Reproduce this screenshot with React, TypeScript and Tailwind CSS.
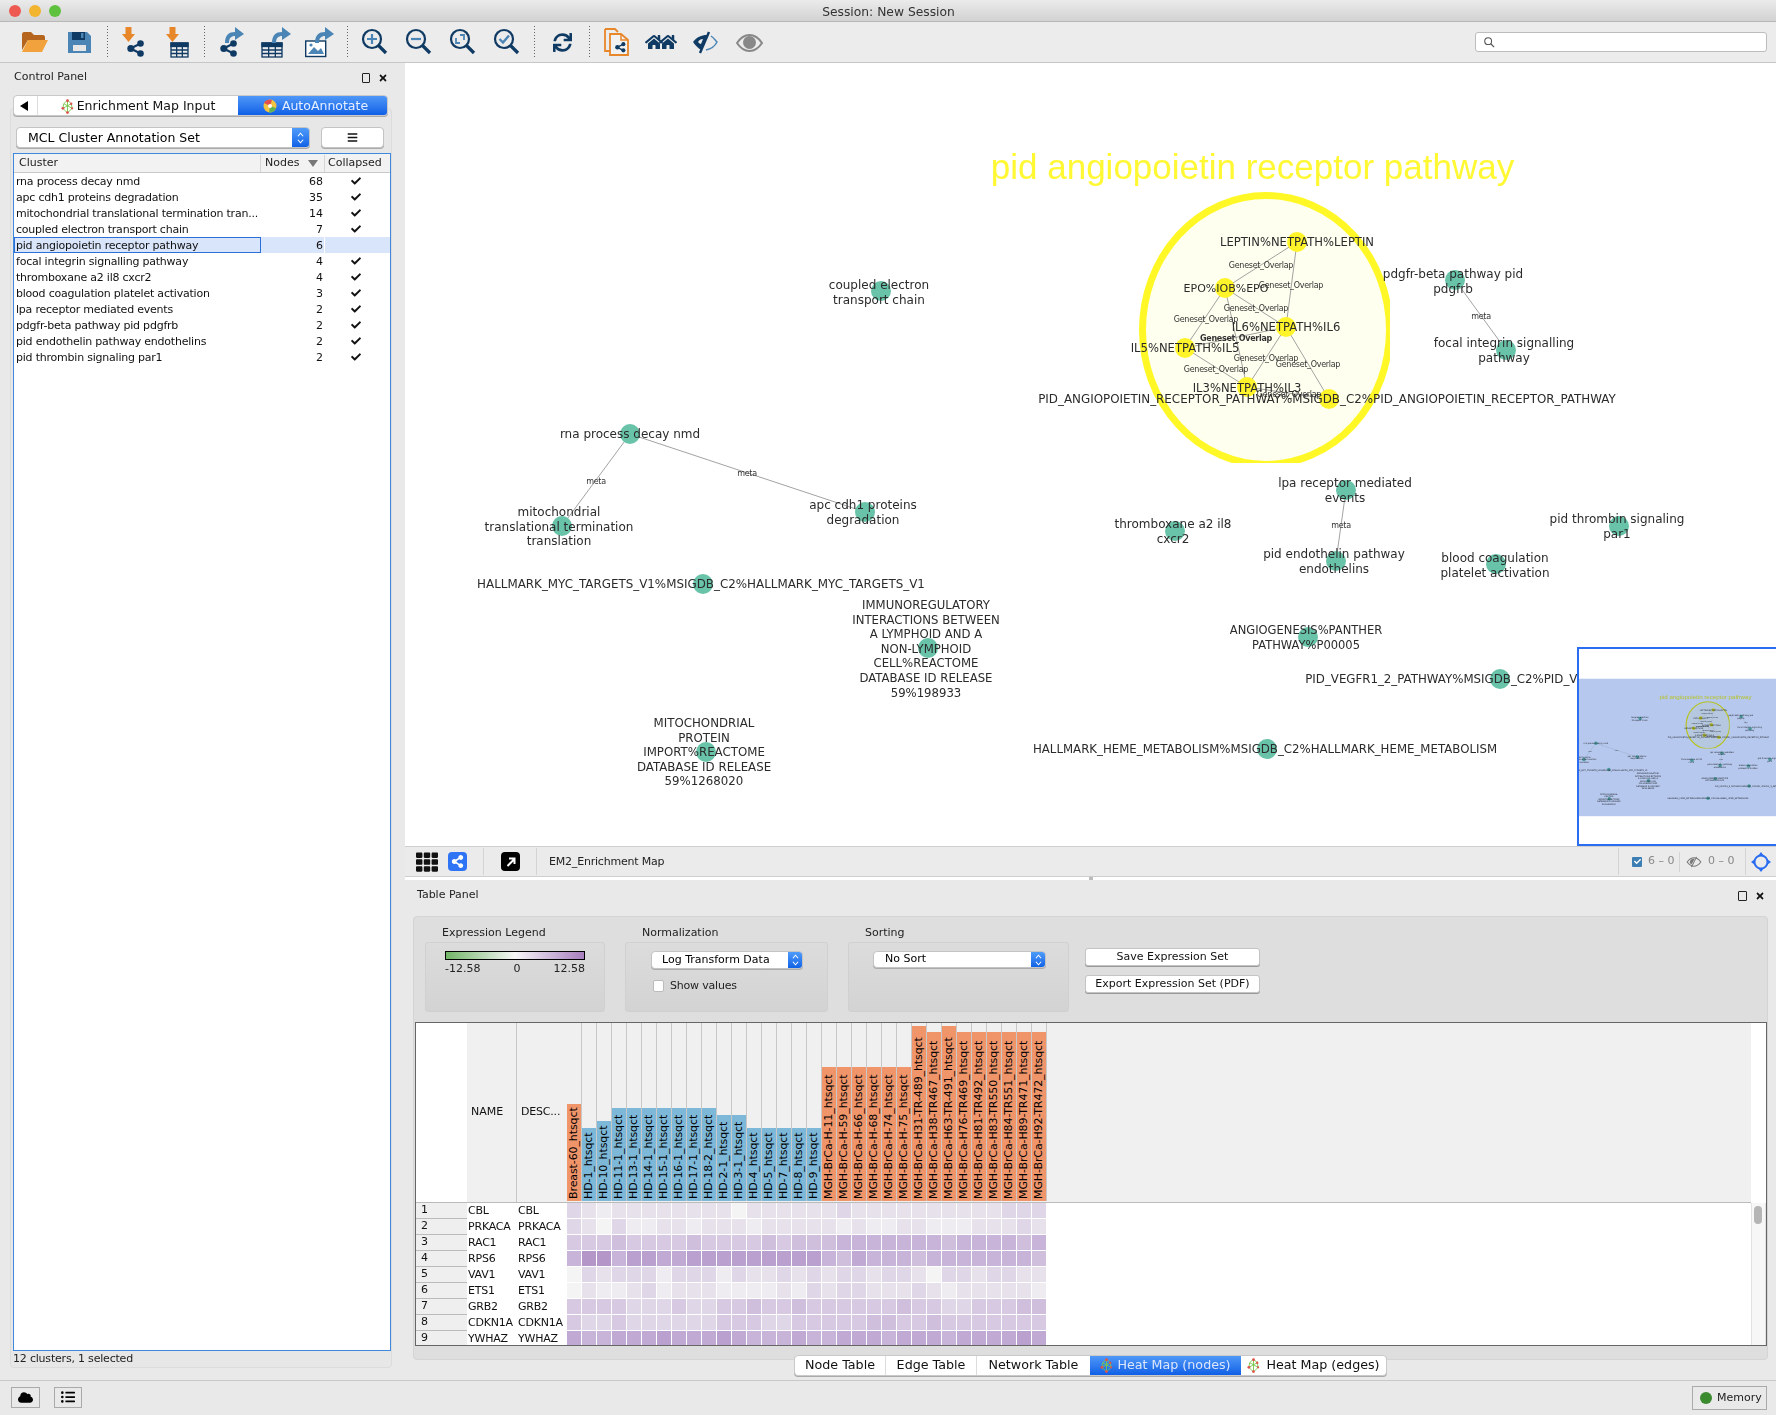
import { FaBars, FaCheck, FaCloud, FaHome, FaListUl, FaShareAlt, FaSync, FaTh, FaTimes } from "react-icons/fa";

const NAVY = "#0f3a63";
const STEEL = "#4a85b5";
const ORANGE = "#e8862a";

type GraphNode = { x: number; y: number; lx: number; ly: number; lines: string[]; hot?: boolean; fs?: number };

const NODES: Record<string, GraphNode> = {
  leptin: { x: 1297, y: 242, lx: 1297, ly: 242, lines: ["LEPTIN%NETPATH%LEPTIN"], hot: true, fs: 11.6 },
  epo: { x: 1225, y: 288, lx: 1226, ly: 288, lines: ["EPO%IOB%EPO"], hot: true, fs: 11 },
  il6: { x: 1286, y: 327, lx: 1286, ly: 327, lines: ["IL6%NETPATH%IL6"], hot: true, fs: 11.6 },
  il5: { x: 1185, y: 348, lx: 1185, ly: 348, lines: ["IL5%NETPATH%IL5"], hot: true, fs: 11.6 },
  il3: { x: 1247, y: 387, lx: 1247, ly: 388, lines: ["IL3%NETPATH%IL3"], hot: true, fs: 11.6 },
  ang: { x: 1329, y: 399, lx: 1327, ly: 399, lines: ["PID_ANGIOPOIETIN_RECEPTOR_PATHWAY%MSIGDB_C2%PID_ANGIOPOIETIN_RECEPTOR_PATHWAY"], hot: true, fs: 11.88 },
  pdgfr: { x: 1455, y: 280, lx: 1453, ly: 274, lines: ["pdgfr-beta pathway pid", "pdgfrb"] },
  focal: { x: 1506, y: 350, lx: 1504, ly: 343, lines: ["focal integrin signalling", "pathway"] },
  coupled: { x: 881, y: 291, lx: 879, ly: 285, lines: ["coupled electron", "transport chain"] },
  rna: { x: 630, y: 434, lx: 630, ly: 434, lines: ["rna process decay nmd"] },
  mito: { x: 562, y: 526, lx: 559, ly: 512, lines: ["mitochondrial", "translational termination", "translation"] },
  apc: { x: 865, y: 512, lx: 863, ly: 505, lines: ["apc cdh1 proteins", "degradation"] },
  myc: { x: 703, y: 584, lx: 701, ly: 584, lines: ["HALLMARK_MYC_TARGETS_V1%MSIGDB_C2%HALLMARK_MYC_TARGETS_V1"], fs: 11.9 },
  immuno: {
    x: 928,
    y: 648,
    lx: 926,
    ly: 605,
    lines: ["IMMUNOREGULATORY", "INTERACTIONS BETWEEN", "A LYMPHOID AND A", "NON-LYMPHOID", "CELL%REACTOME", "DATABASE ID RELEASE", "59%198933"],
    fs: 11.7,
  },
  import: { x: 706, y: 752, lx: 704, ly: 723, lines: ["MITOCHONDRIAL", "PROTEIN", "IMPORT%REACTOME", "DATABASE ID RELEASE", "59%1268020"], fs: 11.8 },
  lpa: { x: 1346, y: 490, lx: 1345, ly: 483, lines: ["lpa receptor mediated", "events"] },
  thromboxane: { x: 1175, y: 531, lx: 1173, ly: 524, lines: ["thromboxane a2 il8", "cxcr2"] },
  endo: { x: 1336, y: 561, lx: 1334, ly: 554, lines: ["pid endothelin pathway", "endothelins"] },
  blood: { x: 1496, y: 564, lx: 1495, ly: 558, lines: ["blood coagulation", "platelet activation"] },
  thrombin: { x: 1619, y: 526, lx: 1617, ly: 519, lines: ["pid thrombin signaling", "par1"] },
  angio: { x: 1308, y: 637, lx: 1306, ly: 630, lines: ["ANGIOGENESIS%PANTHER", "PATHWAY%P00005"], fs: 11.5 },
  vegfr: { x: 1500, y: 679, lx: 1498, ly: 679, lines: ["PID_VEGFR1_2_PATHWAY%MSIGDB_C2%PID_VEGFR1_2_PATHWAY"], fs: 11.8 },
  heme: { x: 1267, y: 749, lx: 1265, ly: 749, lines: ["HALLMARK_HEME_METABOLISM%MSIGDB_C2%HALLMARK_HEME_METABOLISM"], fs: 11.77 },
};

const EDGES = [
  ["leptin", "epo"],
  ["leptin", "il6"],
  ["epo", "il6"],
  ["epo", "il5"],
  ["epo", "il3"],
  ["il6", "il5"],
  ["il6", "il3"],
  ["il6", "ang"],
  ["il5", "il3"],
  ["il3", "ang"],
  ["pdgfr", "focal"],
  ["rna", "mito"],
  ["rna", "apc"],
  ["lpa", "endo"],
];

const EDGE_LABELS = [
  { x: 1261, y: 265, t: "Geneset_Overlap" },
  { x: 1291, y: 285, t: "Geneset_Overlap" },
  { x: 1256, y: 308, t: "Geneset_Overlap" },
  { x: 1206, y: 319, t: "Geneset_Overlap" },
  { x: 1236, y: 338, t: "Geneset_Overlap", bold: true },
  { x: 1266, y: 358, t: "Geneset_Overlap" },
  { x: 1308, y: 364, t: "Geneset_Overlap" },
  { x: 1216, y: 369, t: "Geneset_Overlap" },
  { x: 1289, y: 394, t: "Geneset_Overlap" },
  { x: 1481, y: 316, t: "meta" },
  { x: 596, y: 481, t: "meta" },
  { x: 747, y: 473, t: "meta" },
  { x: 1341, y: 525, t: "meta" },
];

function NetworkGraph({ id }: { id: string }) {
  return (
    <g>
      <clipPath id={id}>
        <rect x="400" y="60" width="990" height="403" />
      </clipPath>
      <text x="1252.5" y="179" fontSize="35" fill="#fff833" textAnchor="middle" className="font-['Liberation_Sans',sans-serif]">
        pid angiopoietin receptor pathway
      </text>
      <ellipse cx="1266" cy="330" rx="123.5" ry="134.5" fill="#fffff0" stroke="#fff826" strokeWidth="7" clipPath={`url(#${id})`} />
      {EDGES.map(([a, b]) => (
        <line key={a + b} x1={NODES[a].x} y1={NODES[a].y} x2={NODES[b].x} y2={NODES[b].y} stroke="#8a8a8a" strokeWidth="0.8" />
      ))}
      {Object.entries(NODES).map(([key, n]) => (
        <circle key={key} cx={n.x} cy={n.y} r="10" fill={n.hot ? "#fff42a" : "#68c3a8"} />
      ))}
      {EDGE_LABELS.map((l) => (
        <text
          key={`${l.x}-${l.y}`}
          x={l.x}
          y={l.y}
          fontSize="8"
          fill="#333"
          fontWeight={l.bold ? 700 : 400}
          textAnchor="middle"
          dominantBaseline="central"
          letterSpacing="-0.3"
        >
          {l.t}
        </text>
      ))}
      {Object.entries(NODES).map(([key, n]) =>
        n.lines.map((line, i) => (
          <text key={key + i} x={n.lx} y={n.ly + i * 14.6} fontSize={n.fs ?? 12} fill="#2b2b2b" textAnchor="middle" dominantBaseline="central">
            {line}
          </text>
        )),
      )}
    </g>
  );
}

function ShareGlyph({ x, y, s = 1, c = NAVY }: { x: number; y: number; s?: number; c?: string }) {
  return (
    <g transform={`translate(${x} ${y}) scale(${s})`} fill={c} stroke={c}>
      <path d="M3.5 8.5 L13.5 3.5 M3.5 8.5 L13.5 13.5" strokeWidth="2.2" fill="none" />
      <circle cx="3.8" cy="8.5" r="3.5" stroke="none" />
      <circle cx="13.5" cy="3.5" r="3.3" stroke="none" />
      <circle cx="13.5" cy="13.5" r="3.3" stroke="none" />
    </g>
  );
}

function TableGlyph({ x, y, w = 17, h = 14 }: { x: number; y: number; w?: number; h?: number }) {
  return (
    <g fill="none" stroke={NAVY} strokeWidth="1.3">
      <rect x={x} y={y} width={w} height={h} />
      <rect x={x} y={y} width={w} height={h / 4} fill={NAVY} />
      <path d={`M${x + w / 3} ${y}V${y + h}M${x + (2 * w) / 3} ${y}V${y + h}M${x} ${y + h * 0.5}H${x + w}M${x} ${y + h * 0.75}H${x + w}`} />
    </g>
  );
}

function DownArrow({ x }: { x: number }) {
  return <path transform={`translate(${x} 0)`} d="M3.5 1H9.5V8H13L6.5 16L0 8H3.5Z" fill={ORANGE} />;
}

function CurvedArrow({ x }: { x: number }) {
  return <path transform={`translate(${x} 1)`} d="M0 16C0 8 4 5 10 5V0L19 7L10 13V9C6 9 4 11 4 16Z" fill={STEEL} />;
}

function Icon32({ className, children }: { className: string; children: React.ReactNode }) {
  return (
    <svg viewBox="0 0 32 32" className={`h-8 w-8 shrink-0 ${className}`}>
      {children}
    </svg>
  );
}

function Magnifier({ children }: { children?: React.ReactNode }) {
  return (
    <>
      <circle cx="13" cy="13" r="9" fill="none" stroke={NAVY} strokeWidth="2.2" />
      <path d="M19.5 19.5L27 27" stroke={NAVY} strokeWidth="3.2" />
      {children}
    </>
  );
}

function Sep({ className }: { className: string }) {
  return <div className={`h-[33px] w-px shrink-0 bg-[repeating-linear-gradient(#666_0_1px,transparent_1px_3px)] ${className}`} />;
}

function MainToolbar() {
  return (
    <div className="flex h-[41px] shrink-0 items-center border-b border-[#c6c6c6] bg-[#ececec]">
      <Icon32 className="ml-[19px]">
        <path d="M3 24V8C3 7 4 6 5 6H12L15 9H24C25 9 26 10 26 11V14H9L3 24Z" fill="#b5651d" />
        <path d="M9 14H29L23 26H3Z" fill="#f2a23c" />
      </Icon32>
      <Icon32 className="ml-[12px]">
        <path d="M5 6H24L28 10V27H5Z" fill={STEEL} />
        <path d="M9 6H22V14H9Z" fill={NAVY} />
        <rect x="18" y="7" width="2.5" height="5" fill={STEEL} />
        <rect x="10" y="19" width="13" height="6" fill="#e6e6e6" />
      </Icon32>
      <Sep className="ml-[12px]" />
      <Icon32 className="ml-[9px]">
        <DownArrow x={5} />
        <ShareGlyph x={10} y={14} />
      </Icon32>
      <Icon32 className="ml-[11px]">
        <DownArrow x={6} />
        <TableGlyph x={11} y={17} />
      </Icon32>
      <Sep className="ml-[12px]" />
      <Icon32 className="ml-[8px]">
        <ShareGlyph x={7} y={14} />
        <CurvedArrow x={12} />
      </Icon32>
      <Icon32 className="ml-[15px]">
        <TableGlyph x={2} y={17} w={20} />
        <CurvedArrow x={12} />
      </Icon32>
      <Icon32 className="ml-[12px]">
        <rect x="1.7" y="15" width="20" height="15.5" fill="#fff" stroke={NAVY} strokeWidth="1.4" />
        <path d="M4 28L10 21L14 25L17 22L20 28Z" fill={STEEL} />
        <circle cx="7" cy="19" r="1.6" fill={STEEL} />
        <CurvedArrow x={11} />
      </Icon32>
      <Sep className="ml-[11px]" />
      <Icon32 className="ml-[11px]">
        <Magnifier>
          <path d="M8 13H18M13 8V18" stroke={STEEL} strokeWidth="2.2" />
        </Magnifier>
      </Icon32>
      <Icon32 className="ml-[12px]">
        <Magnifier>
          <path d="M8 13H18" stroke={STEEL} strokeWidth="2.2" />
        </Magnifier>
      </Icon32>
      <Icon32 className="ml-[12px]">
        <Magnifier>
          <path d="M9 12V17H13M17 14V9H13" stroke={STEEL} strokeWidth="1.8" fill="none" />
        </Magnifier>
      </Icon32>
      <Icon32 className="ml-[12px]">
        <Magnifier>
          <path d="M8.5 13L12 16.5L18 9.5" stroke={STEEL} strokeWidth="2.4" fill="none" />
        </Magnifier>
      </Icon32>
      <Sep className="ml-[11px]" />
      <div className="ml-[11px] flex h-8 w-8 shrink-0 items-center justify-center">
        <FaSync size={19} color={NAVY} />
      </div>
      <Sep className="ml-[11px]" />
      <Icon32 className="ml-[11px]">
        <path d="M4 3H14L17 6M4 3V25H9" fill="none" stroke={ORANGE} strokeWidth="1.8" />
        <path d="M9 8H20L27 14V29H9Z" fill="#f1f1f1" stroke={ORANGE} strokeWidth="1.8" />
        <path d="M20 8V14H27" fill="none" stroke={ORANGE} strokeWidth="1.5" />
        <ShareGlyph x={14} y={16} s={0.62} />
      </Icon32>
      <div className="ml-[12px] flex h-8 w-8 shrink-0 items-center justify-center">
        <FaHome size={18} color={NAVY} className="-mr-[2px]" />
        <FaHome size={18} color={NAVY} className="-ml-[2px]" />
      </div>
      <Icon32 className="ml-[12px]">
        <path d="M4 16C8 11 12 9 18 9L12 24C9 22 7 20 4 16Z" fill={NAVY} />
        <path d="M9 16C10 14 12 13 14 13L12 18C11 18 10 17 9 16Z" fill="#ececec" />
        <path d="M20 6L11 27" stroke={NAVY} strokeWidth="2.4" />
        <path d="M22 10C25 12 26 14 28 16C26 20 22 23 17 24" fill="none" stroke={STEEL} strokeWidth="1.5" />
      </Icon32>
      <Icon32 className="ml-[12px]">
        <path d="M4 17C8 11 12 9 16.500 9C21 9 25 11 29 17C25 23 21 25 16.500 25C12 25 8 23 4 17Z" fill="none" stroke="#888" strokeWidth="2" />
        <circle cx="16.500" cy="16.500" r="6.500" fill="#888" />
      </Icon32>
      <div className="ml-auto mr-[9px] flex h-[20px] w-[292px] items-center rounded-[3px] border border-[#bdbdbd] bg-white pl-[7px]">
        <svg viewBox="0 0 14 14" className="h-[12px] w-[12px]">
          <circle cx="6" cy="6" r="4" fill="none" stroke="#555" strokeWidth="1.2" />
          <path d="M9 9L13 13" stroke="#555" strokeWidth="1.4" />
        </svg>
      </div>
    </div>
  );
}

function Select({ label, className, textClass, stepClass }: { label: string; className: string; textClass: string; stepClass: string }) {
  return (
    <div className={`flex items-center overflow-hidden rounded-[4px] border border-[#c4c4c4] bg-white shadow-[0_1px_0_#aaa] ${className}`}>
      <span className={`flex-1 truncate text-black ${textClass}`}>{label}</span>
      <div className={`flex h-full shrink-0 items-center justify-center bg-gradient-to-b from-[#4f9bfb] to-[#0f62e6] ${stepClass}`}>
        <svg viewBox="0 0 10 16" className="h-[14px] w-[9px]">
          <path d="M2 6L5 2.500L8 6M2 10L5 13.500L8 10" fill="none" stroke="#fff" strokeWidth="1.2" />
        </svg>
      </div>
    </div>
  );
}

function EmIcon({ className = "" }: { className?: string }) {
  return (
    <svg viewBox="0 0 14 16" className={`h-[15px] w-[13px] shrink-0 ${className}`}>
      <path d="M7 1L11 5L12 10L7 15L2 10L3 5ZM7 1V15M3 5L12 10M11 5L2 10" fill="none" stroke="#7ac74f" strokeWidth="1" />
      <g fill="#e2504c">
        <circle cx="7" cy="1.800" r="1.500" />
        <circle cx="11" cy="5" r="1.300" />
        <circle cx="2" cy="10" r="1.500" />
        <circle cx="7" cy="14.500" r="1.500" />
        <circle cx="12" cy="10" r="1.200" />
      </g>
    </svg>
  );
}

const CLUSTERS: [string, number, boolean][] = [
  ["rna process decay nmd", 68, true],
  ["apc cdh1 proteins degradation", 35, true],
  ["mitochondrial translational termination tran...", 14, true],
  ["coupled electron transport chain", 7, true],
  ["pid angiopoietin receptor pathway", 6, false],
  ["focal integrin signalling pathway", 4, true],
  ["thromboxane a2 il8 cxcr2", 4, true],
  ["blood coagulation platelet activation", 3, true],
  ["lpa receptor mediated events", 2, true],
  ["pdgfr-beta pathway pid pdgfrb", 2, true],
  ["pid endothelin pathway endothelins", 2, true],
  ["pid thrombin signaling par1", 2, true],
];

function ClusterTable() {
  return (
    <div className="ml-[1px] mt-[5px] flex w-[378px] flex-1 flex-col border border-[#3f88dc] bg-white text-[11px] text-[#111]">
      <div className="flex h-[19px] shrink-0 items-center border-b border-[#c9c9c9] bg-[#f2f2f2] pt-[1px] text-[#222]">
        <div className="w-[247px] border-r border-[#d5d5d5] pl-[5px]">Cluster</div>
        <div className="flex w-[64px] items-center border-r border-[#d5d5d5] pl-[4px]">
          Nodes
          <span className="ml-[9px] h-0 w-0 border-x-[5px] border-t-[7px] border-x-transparent border-t-[#777]" />
        </div>
        <div className="flex-1 pl-[3px]">Collapsed</div>
      </div>
      {CLUSTERS.map(([name, n, collapsed]) => {
        const selected = !collapsed;
        return (
          <div key={name} className="flex h-4 shrink-0 items-center">
            <div className={`flex h-full w-[247px] items-center ${selected ? "border border-[#2c6fd6] bg-[#d9e5fb] pl-[1px]" : "pl-[2px]"}`}>
              <span className="whitespace-nowrap pt-[2px] tracking-[-0.22px]">{name}</span>
            </div>
            <div className={`flex h-full w-[64px] items-center justify-end border-r border-white pr-[1px] pt-[2px] ${selected ? "bg-[#d9e5fb]" : ""}`}>{n}</div>
            <div className={`flex h-full flex-1 items-center pl-[26px] ${selected ? "bg-[#d9e5fb]" : ""}`}>
              {collapsed && <FaCheck size={10} color="#111" />}
            </div>
          </div>
        );
      })}
    </div>
  );
}

function ControlPanel() {
  return (
    <aside className="flex w-[405px] shrink-0 flex-col pb-[12px]">
      <div className="flex h-[32px] shrink-0 items-center pb-[3px] pl-[14px] pr-[17px] text-[11px] text-[#222]">
        <span className="flex-1">Control Panel</span>
        <span className="mr-[8px] h-[10px] w-[8px] rounded-[1px] border border-[#222]" />
        <FaTimes size={10} color="#111" />
      </div>
      <div className="relative z-10 ml-[13px] flex h-[21px] w-[375px] shrink-0 overflow-hidden rounded-[4px] border border-[#c9c9c9] bg-white text-[12.5px] shadow-[0_1px_0_#aaa]">
        <div className="flex w-[24px] items-center justify-center border-r border-[#ddd] pr-[3px]">
          <span className="h-0 w-0 border-y-[5px] border-r-[8px] border-y-transparent border-r-black" />
        </div>
        <div className="flex w-[200px] items-center justify-center gap-[3px] pt-[1px] text-[#111]">
          <EmIcon />
          Enrichment Map Input
        </div>
        <div className="flex flex-1 items-center justify-center gap-[5px] bg-gradient-to-b from-[#4f97f8] to-[#0d5fe6] pl-[6px] pt-[1px] text-[#e6efff]">
          <svg viewBox="0 0 14 14" className="h-[14px] w-[14px]">
            <circle cx="7" cy="7" r="6.500" fill="#f5c342" />
            <path d="M7 7L1 4A6.500 6.500 0 0 1 9 1Z" fill="#e2504c" />
            <path d="M7 7L13 9A6.500 6.500 0 0 1 6 13.400Z" fill="#62b356" />
            <circle cx="7" cy="7" r="2" fill="#fff" />
          </svg>
          AutoAnnotate
        </div>
      </div>
      <div className="-mt-[8px] ml-[10px] flex w-[382px] flex-1 flex-col rounded-[4px] border border-[#dcdcdc] bg-[#e7e7e7] pl-[1px] pt-[18px]">
        <div className="flex shrink-0 items-center pl-[4px]">
          <Select label="MCL Cluster Annotation Set" className="h-[21px] w-[294px]" textClass="pl-[11px] pt-[1px] text-[12.5px]" stepClass="w-[17px]" />
          <div className="ml-[11px] flex h-[21px] w-[63px] items-center justify-center rounded-[4px] border border-[#c4c4c4] bg-white shadow-[0_1px_0_#aaa]">
            <FaBars size={11} color="#111" />
          </div>
        </div>
        <ClusterTable />
        <div className="h-[16px] shrink-0 pl-[1px] text-[11px] leading-[15px] tracking-[-0.2px] text-[#222]">12 clusters, 1 selected</div>
      </div>
    </aside>
  );
}

function NetworkCanvas() {
  return (
    <div className="relative h-[783px] shrink-0 overflow-hidden bg-white">
      <svg viewBox="405 63 1371 783" className="absolute inset-0 h-[783px] w-[1371px]">
        <NetworkGraph id="main-clip" />
      </svg>
      <div className="absolute bottom-0 right-0 h-[199px] w-[199px] border-2 border-r-0 border-[#2a6df0] bg-white">
        <svg viewBox="534 -107 1119 1118" className="h-[195px] w-[197px]" preserveAspectRatio="none">
          <NetworkGraph id="thumb-clip" />
          <rect x="534" y="62" width="1119" height="791" fill="#b6c8ee" className="mix-blend-multiply" />
          <rect x="534" y="-107" width="1119" height="169" fill="#fff" />
          <rect x="534" y="853" width="1119" height="170" fill="#fff" />
        </svg>
      </div>
    </div>
  );
}

function NetworkBar() {
  return (
    <div className="flex h-[31px] shrink-0 items-center border-y border-[#cecece] bg-[#ebebeb] text-[11px] text-[#222]">
      <FaTh size={22} color="#111" className="ml-[11px]" />
      <div className="ml-[10px] flex h-[19px] w-[19px] items-center justify-center rounded-[4px] bg-[#2f74f5]">
        <FaShareAlt size={13} color="#fff" />
      </div>
      <div className="ml-[16px] h-[27px] w-px bg-[#d4d4d4]" />
      <div className="ml-[17px] flex h-[19px] w-[19px] items-center justify-center rounded-[4px] bg-black">
        <svg viewBox="0 0 12 12" className="h-[12px] w-[12px]">
          <path d="M2.500 10L9 3.500M4 2.500H9.500V8" fill="none" stroke="#fff" strokeWidth="2" />
        </svg>
      </div>
      <div className="ml-[16px] h-[27px] w-px bg-[#d4d4d4]" />
      <span className="ml-[12px] pt-[2px] tracking-[-0.2px]">EM2_Enrichment Map</span>
      <div className="ml-auto h-[27px] w-px bg-[#d4d4d4]" />
      <span className="ml-[13px] flex h-[10px] w-[10px] items-center justify-center rounded-[1px] bg-[#3d7fb5]">
        <FaCheck size={7} color="#fff" />
      </span>
      <span className="ml-[6px] w-[29px] text-[#888]">6 – 0</span>
      <div className="ml-[2px] h-[20px] w-px bg-[#d4d4d4]" />
      <svg viewBox="0 0 18 14" className="ml-[6px] h-[12px] w-[16px]">
        <path d="M1 7C4 3 6.500 2 9 2C12 2 14 3 17 7C14 11 12 12 9 12C6.500 12 4 11 1 7Z" fill="none" stroke="#777" strokeWidth="1.200" />
        <path d="M4 7C5 4 7 3 10 3L6 10C5 9 4 8 4 7Z" fill="#777" />
        <path d="M12 1L6 13" stroke="#777" strokeWidth="1.200" />
      </svg>
      <span className="ml-[6px] w-[29px] text-[#888]">0 – 0</span>
      <div className="ml-[8px] h-[27px] w-px bg-[#d4d4d4]" />
      <svg viewBox="0 0 20 20" className="mx-[5px] h-[20px] w-[20px]">
        <circle cx="10" cy="10" r="6.500" fill="none" stroke="#2a6df0" strokeWidth="2" />
        <path d="M10 0L13 4H7ZM10 20L13 16H7ZM0 10L4 7V13ZM20 10L16 7V13Z" fill="#2a6df0" />
      </svg>
    </div>
  );
}

function Group({ title, titleClass, className, children }: { title: string; titleClass: string; className: string; children: React.ReactNode }) {
  return (
    <div className={`flex shrink-0 flex-col ${className}`}>
      <div className={`h-[17px] text-[11px] leading-[15px] text-[#222] ${titleClass}`}>{title}</div>
      <div className="relative h-[70px] rounded-[3px] border border-[#d0d0d0] bg-gradient-to-b from-[#dcdcdc] to-[#d3d3d3]">{children}</div>
    </div>
  );
}

type Col = { name: string; bar: string; height: string };

const blue = "bg-[#7db8d8]";
const orange = "bg-[#f0956a]";

const COLUMNS: Col[] = [
  { name: "Breast-60_htsqct", bar: orange, height: "h-[97px]" },
  { name: "HD-1_htsqct", bar: blue, height: "h-[73px]" },
  { name: "HD-10_htsqct", bar: blue, height: "h-[80px]" },
  { name: "HD-11-1_htsqct", bar: blue, height: "h-[93px]" },
  { name: "HD-13-1_htsqct", bar: blue, height: "h-[93px]" },
  { name: "HD-14-1_htsqct", bar: blue, height: "h-[93px]" },
  { name: "HD-15-1_htsqct", bar: blue, height: "h-[93px]" },
  { name: "HD-16-1_htsqct", bar: blue, height: "h-[93px]" },
  { name: "HD-17-1_htsqct", bar: blue, height: "h-[93px]" },
  { name: "HD-18-2_htsqct", bar: blue, height: "h-[93px]" },
  { name: "HD-2-1_htsqct", bar: blue, height: "h-[86px]" },
  { name: "HD-3-1_htsqct", bar: blue, height: "h-[86px]" },
  { name: "HD-4_htsqct", bar: blue, height: "h-[73px]" },
  { name: "HD-5_htsqct", bar: blue, height: "h-[73px]" },
  { name: "HD-7_htsqct", bar: blue, height: "h-[73px]" },
  { name: "HD-8_htsqct", bar: blue, height: "h-[73px]" },
  { name: "HD-9_htsqct", bar: blue, height: "h-[73px]" },
  { name: "MGH-BrCa-H-11_htsqct", bar: orange, height: "h-[134px]" },
  { name: "MGH-BrCa-H-59_htsqct", bar: orange, height: "h-[134px]" },
  { name: "MGH-BrCa-H-66_htsqct", bar: orange, height: "h-[134px]" },
  { name: "MGH-BrCa-H-68_htsqct", bar: orange, height: "h-[134px]" },
  { name: "MGH-BrCa-H-74_htsqct", bar: orange, height: "h-[134px]" },
  { name: "MGH-BrCa-H-75_htsqct", bar: orange, height: "h-[134px]" },
  { name: "MGH-BrCa-H31-TR-489_htsqct", bar: orange, height: "h-[175px]" },
  { name: "MGH-BrCa-H38-TR467_htsqct", bar: orange, height: "h-[169px]" },
  { name: "MGH-BrCa-H63-TR-491_htsqct", bar: orange, height: "h-[175px]" },
  { name: "MGH-BrCa-H76-TR469_htsqct", bar: orange, height: "h-[169px]" },
  { name: "MGH-BrCa-H81-TR492_htsqct", bar: orange, height: "h-[169px]" },
  { name: "MGH-BrCa-H83-TR550_htsqct", bar: orange, height: "h-[169px]" },
  { name: "MGH-BrCa-H84-TR551_htsqct", bar: orange, height: "h-[169px]" },
  { name: "MGH-BrCa-H89-TR471_htsqct", bar: orange, height: "h-[169px]" },
  { name: "MGH-BrCa-H92-TR472_htsqct", bar: orange, height: "h-[169px]" },
];

const SHADES = [
  "bg-[#f4f4f4]",
  "bg-[#eeebf1]",
  "bg-[#e7e1ec]",
  "bg-[#dfd6e7]",
  "bg-[#d6c9e1]",
  "bg-[#cfbfdc]",
  "bg-[#c8b4d8]",
  "bg-[#c0a9d3]",
  "bg-[#b9a0ce]",
  "bg-[#b496c9]",
];

const ROWS: [string, string][] = [
  ["CBL", "32122222222022222232222222222333"],
  ["PRKACA", "32031122122212222212112211122232"],
  ["RAC1", "44454444544445455566666665666656"],
  ["RPS6", "69968877888888888657666566666665"],
  ["VAV1", "03233313331322323233233203323322"],
  ["ETS1", "02112312221111213233222321222221"],
  ["GRB2", "44443334334454454444445443344455"],
  ["CDKN1A", "43343333334443344444554454444444"],
  ["YWHAZ", "76677787778766676677767776777787"],
];

function HeatMap() {
  return (
    <div className="ml-[1px] flex h-[324px] w-[1352px] shrink-0 overflow-hidden border border-[#666] bg-white">
      <div className="w-[1335px] shrink-0">
        <div className="flex h-[180px] border-b border-[#bbb]">
          <div className="w-[51px] shrink-0 bg-white" />
          <div className="flex w-[50px] shrink-0 items-center border-r border-[#c8c8c8] bg-[#f0f0f0] pl-[4px] text-[11px] text-[#111]">NAME</div>
          <div className="flex w-[50px] shrink-0 items-center bg-[#f0f0f0] pl-[4px] text-[11px] tracking-[-0.2px] text-[#111]">DESC...</div>
          <div className="flex flex-1 bg-[#f0f0f0] pb-[1px]">
            {COLUMNS.map((c) => (
              <div key={c.name} className="flex w-[15px] shrink-0 flex-col justify-end border-r border-[#c8c8c8]">
                <div
                  className={`w-full rotate-180 whitespace-nowrap pt-[2px] text-[11px] leading-[14px] tracking-[-0.1px] text-black [writing-mode:vertical-rl] ${c.bar} ${c.height}`}
                >
                  {c.name}
                </div>
              </div>
            ))}
          </div>
        </div>
        {ROWS.map(([name, values], r) => (
          <div key={name} className="flex h-4 items-center text-[11px] text-[#111]">
            <div className="flex h-full w-[51px] shrink-0 items-center border-b border-[#bbb] bg-[#efefef] pl-[5px]">{r + 1}</div>
            <div className="w-[50px] shrink-0 whitespace-nowrap pl-[1px] tracking-[-0.2px]">{name}</div>
            <div className="w-[50px] shrink-0 whitespace-nowrap pl-[1px] tracking-[-0.2px]">{name}</div>
            <div className="flex h-full">
              {values.split("").map((v, i) => (
                <div key={i} className={`h-full w-[15px] border-b border-r border-white ${SHADES[Number(v)]}`} />
              ))}
            </div>
          </div>
        ))}
      </div>
      <div className="flex-1 pt-[180px]">
        <div className="h-full w-[15px] border-x border-[#e2e2e2] bg-[#f7f7f7] pl-[2px] pt-[3px]">
          <div className="h-[18px] w-[8px] rounded-[4px] bg-[#b5b5b5]" />
        </div>
      </div>
    </div>
  );
}

function TablePanel() {
  return (
    <div className="flex flex-1 flex-col bg-[#e9e9e9]">
      <div className="flex h-[36px] shrink-0 items-center pb-[5px] pl-[12px] pr-[11px] text-[11px] text-[#222]">
        <span className="flex-1">Table Panel</span>
        <span className="mr-[8px] h-[10px] w-[9px] rounded-[1px] border border-[#222]" />
        <FaTimes size={10} color="#111" />
      </div>
      <div className="ml-[8px] h-[444px] w-[1355px] shrink-0 rounded-[4px] border border-[#d4d4d4] bg-[#dedede]">
        <div className="flex h-[105px] pl-[11px] pt-[8px]">
          <Group title="Expression Legend" titleClass="pl-[17px]" className="w-[180px]">
            <div className="mx-[19px] mt-[8px] h-[9px] border border-black bg-gradient-to-r from-[#72b568] via-[#f7f7f7] to-[#a77fbe]" />
            <div className="mx-[19px] mt-px flex justify-between text-[11px] text-[#222]">
              <span>-12.58</span>
              <span>0</span>
              <span>12.58</span>
            </div>
          </Group>
          <Group title="Normalization" titleClass="pl-[17px]" className="ml-[20px] w-[203px]">
            <Select label="Log Transform Data" className="ml-[25px] mt-[8px] h-[18px] w-[152px]" textClass="pl-[10px] text-[11px]" stepClass="w-[14px]" />
            <div className="ml-[27px] mt-[9px] flex items-center">
              <span className="h-[12px] w-[11px] rounded-[2px] border border-[#bbb] bg-white" />
              <span className="ml-[6px] text-[11px] tracking-[-0.2px] text-[#222]">Show values</span>
            </div>
          </Group>
          <Group title="Sorting" titleClass="pl-[17px]" className="ml-[20px] w-[221px]">
            <Select label="No Sort" className="ml-[24px] mt-[8px] h-[17px] w-[173px]" textClass="pl-[11px] text-[11px]" stepClass="w-[14px]" />
          </Group>
          <div className="ml-[16px] flex w-[175px] shrink-0 flex-col gap-[9px] pt-[23px]">
            <button className="h-[18px] rounded-[3px] border border-[#c4c4c4] bg-white text-[11px] text-[#111] shadow-[0_1px_0_#999]">Save Expression Set</button>
            <button className="h-[18px] rounded-[3px] border border-[#c4c4c4] bg-white text-[11px] text-[#111] shadow-[0_1px_0_#999]">Export Expression Set (PDF)</button>
          </div>
        </div>
        <HeatMap />
      </div>
      <div className="relative z-10 -mt-[5px] ml-[389px] flex h-[21px] w-[593px] shrink-0 overflow-hidden rounded-[4px] border border-[#c9c9c9] bg-white text-[12.7px] text-[#111] shadow-[0_1px_0_#aaa]">
        <div className="flex w-[91px] items-center justify-center border-r border-[#ddd] pb-[1px]">Node Table</div>
        <div className="flex w-[91px] items-center justify-center border-r border-[#ddd] pb-[1px]">Edge Table</div>
        <div className="flex w-[113px] items-center justify-center pb-[1px]">Network Table</div>
        <div className="flex w-[151px] items-center justify-center gap-[4px] bg-gradient-to-b from-[#4f97f8] to-[#0d5fe6] pb-[1px] text-[#dbe6fb]">
          <EmIcon />
          Heat Map (nodes)
        </div>
        <div className="flex flex-1 items-center justify-center gap-[6px] pb-[1px]">
          <EmIcon />
          Heat Map (edges)
        </div>
      </div>
    </div>
  );
}

export default function App() {
  return (
    <div className="flex h-[1415px] w-[1776px] flex-col overflow-hidden bg-[#e9e9e9] font-['DejaVu_Sans',sans-serif]">
      <div className="flex h-[22px] shrink-0 items-center border-b border-[#b8b8b8] bg-gradient-to-b from-[#ebebeb] to-[#d2d2d2]">
        <div className="ml-[9px] flex gap-[8px]">
          <span className="h-[12px] w-[12px] rounded-full bg-[#ee5a52]" />
          <span className="h-[12px] w-[12px] rounded-full bg-[#f3b42f]" />
          <span className="h-[12px] w-[12px] rounded-full bg-[#5fc23f]" />
        </div>
        <div className="-ml-[60px] flex-1 pt-[3px] text-center text-[12.3px] text-[#333]">Session: New Session</div>
      </div>
      <MainToolbar />
      <div className="flex min-h-0 flex-1">
        <ControlPanel />
        <div className="flex min-w-0 flex-1 flex-col">
          <NetworkCanvas />
          <NetworkBar />
          <div className="flex h-[3px] shrink-0 justify-center bg-white">
            <span className="h-[3px] w-[4px] bg-[#bbb]" />
          </div>
          <TablePanel />
        </div>
      </div>
      <div className="flex h-[35px] shrink-0 items-center border-t border-[#c8c8c8] bg-[#e9e9e9] pl-[11px] pr-[9px]">
        <div className="mb-[2px] flex h-[21px] w-[29px] items-center justify-center border border-[#aaa]">
          <FaCloud size={15} color="#000" />
        </div>
        <div className="mb-[2px] ml-[14px] flex h-[21px] w-[28px] items-center justify-center border border-[#aaa]">
          <FaListUl size={14} color="#000" />
        </div>
        <div className="ml-auto flex h-[24px] w-[75px] items-center border border-[#aaa] pl-[7px] text-[11px] text-[#222]">
          <span className="h-[12px] w-[12px] rounded-full bg-[#3a8a2e]" />
          <span className="ml-[5px]">Memory</span>
        </div>
      </div>
    </div>
  );
}
